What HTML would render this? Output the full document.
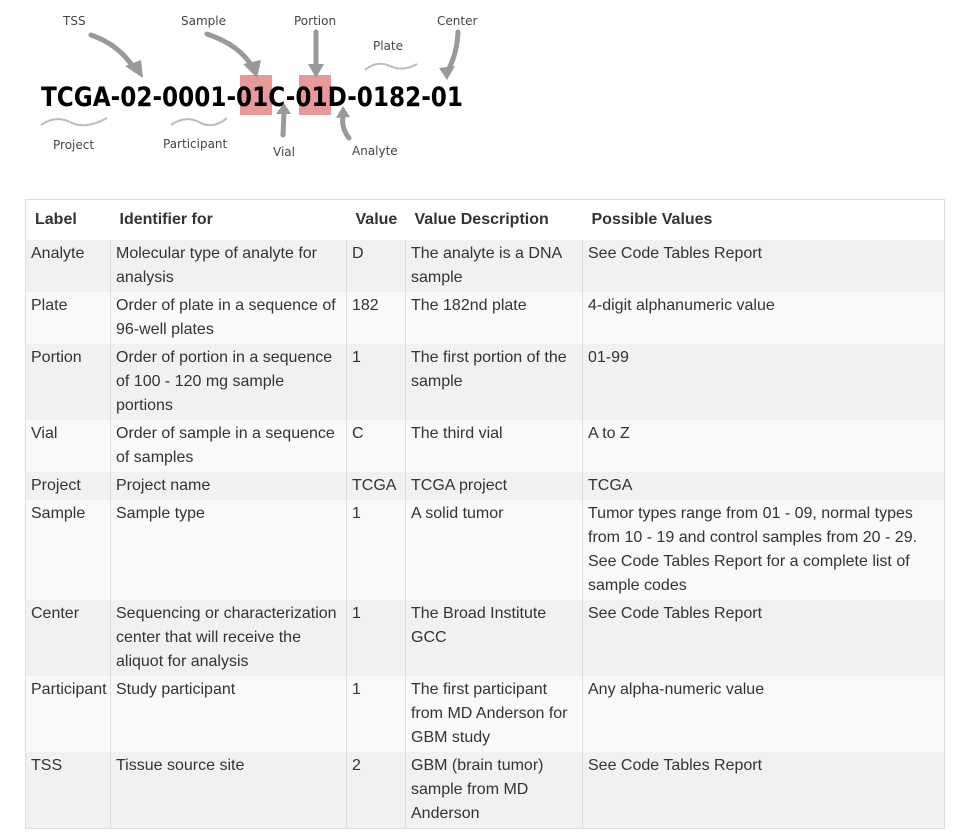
<!DOCTYPE html>
<html><head><meta charset="utf-8"><style>
body{margin:0;background:#fff;width:967px;height:840px;overflow:hidden;font-family:"Liberation Sans",sans-serif;color:#333;}
.img{position:absolute;left:25px;top:0;width:454px;height:175px;background:#fff;}
table{position:absolute;left:25px;top:199px;border-collapse:collapse;font-size:16px;line-height:24px;table-layout:fixed;width:920px;border:1px solid #ddd;}
td,th{vertical-align:top;padding:2px 5px 2px 5px;white-space:nowrap;border-left:1px solid #ddd;text-align:left;}
th{font-weight:bold;padding:8px 5px 8px 9px;height:24px;border-left:none;}
tbody tr:nth-child(odd){background:#f1f1f1;}
tbody tr:nth-child(even){background:#f9f9f9;}
td:first-child{border-left:none;}
</style></head><body>
<div class="img">
<svg width="454" height="175" viewBox="0 0 454 175" font-family="DejaVu Sans, sans-serif">
<rect x="215" y="75" width="32" height="40" fill="#e7999a"/>
<rect x="274" y="75" width="32" height="40" fill="#e7999a"/>
<text x="16" y="106" font-size="27" font-weight="bold" fill="#000" textLength="422" lengthAdjust="spacingAndGlyphs">TCGA-02-0001-01C-01D-0182-01</text>
<g font-size="12" fill="#444">
<text x="38" y="25">TSS</text><text x="156" y="25">Sample</text><text x="269" y="25">Portion</text><text x="348" y="50">Plate</text><text x="412" y="25">Center</text>
<text x="28" y="149">Project</text><text x="138" y="148">Participant</text><text x="248" y="156">Vial</text><text x="327" y="155">Analyte</text>
</g>
<g stroke="#999" stroke-width="5" fill="none" stroke-linecap="round">
<path d="M66 35 Q95 45 110 70"/><path d="M182 34 Q215 45 228 68"/><path d="M291 32 L291 66"/><path d="M433 32 Q432 55 422 72"/>
<path d="M258 135 L259 112"/><path d="M324 138 Q316 128 318 115"/>
</g>
<g fill="#999"><path d="M100 66 L118 78 L116 60Z"/><path d="M218 64 L232 78 L236 60Z"/><path d="M283 64 L299 64 L291 78Z"/><path d="M414 68 L422 80 L430 66Z"/><path d="M251 114 L259 103 L266 114Z"/><path d="M311 118 L318 106 L325 117Z"/></g>
<g stroke="#bbb" stroke-width="2" fill="none">
<path d="M16 125 Q30 115 45 122 Q60 130 82 118"/><path d="M146 125 Q160 115 174 122 Q188 130 202 118"/><path d="M340 70 Q352 60 365 66 Q378 72 392 64"/>
</g>
</svg>
</div>
<table>
<colgroup><col style="width:85px"><col style="width:236px"><col style="width:59px"><col style="width:177px"><col></colgroup>
<thead><tr><th>Label</th><th>Identifier for</th><th>Value</th><th>Value Description</th><th>Possible Values</th></tr></thead>
<tbody>
<tr><td>Analyte</td><td>Molecular type of analyte for<br>analysis</td><td>D</td><td>The analyte is a DNA<br>sample</td><td>See Code Tables Report</td></tr>
<tr><td>Plate</td><td>Order of plate in a sequence of<br>96-well plates</td><td>182</td><td>The 182nd plate</td><td>4-digit alphanumeric value</td></tr>
<tr><td>Portion</td><td>Order of portion in a sequence<br>of 100 - 120 mg sample<br>portions</td><td>1</td><td>The first portion of the<br>sample</td><td>01-99</td></tr>
<tr><td>Vial</td><td>Order of sample in a sequence<br>of samples</td><td>C</td><td>The third vial</td><td>A to Z</td></tr>
<tr><td>Project</td><td>Project name</td><td>TCGA</td><td>TCGA project</td><td>TCGA</td></tr>
<tr><td>Sample</td><td>Sample type</td><td>1</td><td>A solid tumor</td><td>Tumor types range from 01 - 09, normal types<br>from 10 - 19 and control samples from 20 - 29.<br>See Code Tables Report for a complete list of<br>sample codes</td></tr>
<tr><td>Center</td><td>Sequencing or characterization<br>center that will receive the<br>aliquot for analysis</td><td>1</td><td>The Broad Institute<br>GCC</td><td>See Code Tables Report</td></tr>
<tr><td>Participant</td><td>Study participant</td><td>1</td><td>The first participant<br>from MD Anderson for<br>GBM study</td><td>Any alpha-numeric value</td></tr>
<tr><td>TSS</td><td>Tissue source site</td><td>2</td><td>GBM (brain tumor)<br>sample from MD<br>Anderson</td><td>See Code Tables Report</td></tr>
</tbody></table>
</body></html>
